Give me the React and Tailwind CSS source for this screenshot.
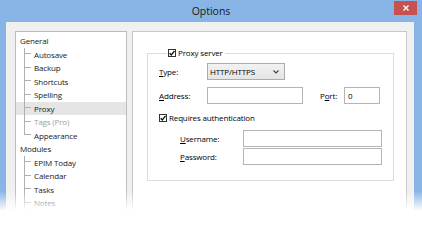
import React from "react";

function Check() {
  return (
    <span className="w-[8px] h-[8px] shrink-0 border border-[#333] bg-white flex items-center justify-center">
      <svg width="6" height="6" viewBox="0 0 6 6">
        <path d="M0.6 3.2 L2.3 4.9 L5.5 0.8" stroke="#111" strokeWidth="1.3" fill="none" />
      </svg>
    </span>
  );
}

function TreeRow({ label, child, last, selected, disabled }) {
  return (
    <div className={"flex h-[13.5px] items-stretch " + (selected ? "bg-[#e5e5e5]" : "")}>
      {child ? (
        <>
          <div className="w-[8px] shrink-0" />
          <div className="w-[7px] shrink-0 flex flex-col mr-[3px]">
            <div className="h-1/2 border-l border-b border-[#b0b0b0]" />
            <div className={"h-1/2 " + (last ? "" : "border-l border-[#b0b0b0]")} />
          </div>
        </>
      ) : (
        <div className="w-[4px] shrink-0" />
      )}
      <span className={"leading-[13.5px] whitespace-nowrap " + (disabled ? "text-[#a0a0a0]" : "text-[#1a1a1a]")}>
        {label}
      </span>
    </div>
  );
}

function Tree() {
  return (
    <div className="w-[112px] shrink-0 border border-[#bcbcbc] bg-white pt-[2px] flex flex-col">
      <TreeRow label="General" />
      <TreeRow label="Autosave" child />
      <TreeRow label="Backup" child />
      <TreeRow label="Shortcuts" child />
      <TreeRow label="Spelling" child />
      <TreeRow label="Proxy" child selected />
      <TreeRow label="Tags (Pro)" child disabled />
      <TreeRow label="Appearance" child last />
      <TreeRow label="Modules" />
      <TreeRow label="EPIM Today" child />
      <TreeRow label="Calendar" child />
      <TreeRow label="Tasks" child />
      <TreeRow label="Notes" child />
    </div>
  );
}

function Input({ className, children }) {
  return (
    <div className={"h-[17px] border border-[#b4b4b4] bg-white flex items-center px-[3px] " + (className || "")}>
      {children}
    </div>
  );
}

function Right() {
  return (
    <div className="flex-1 border border-[#c8c8c8] bg-white pl-[14px] pr-[12px]">
      <fieldset className="mt-[15px] border border-[#dcdcdc] pl-[11px] pb-[15px]">
        <legend className="ml-[8px] px-[1px] leading-[12px] h-[12px] flex items-center gap-[2px]">
          <Check />
          <span className="pr-[1px]">Proxy server</span>
        </legend>
        <div className="mt-[4px] flex items-center h-[17px]">
          <span className="w-[48px] shrink-0"><u>T</u>ype:</span>
          <div className="w-[78px] h-[17px] border border-[#acacac] bg-linear-to-b from-[#f2f2f2] to-[#e5e5e5] flex items-center justify-between pl-[2px] pr-[5px]">
            <span>HTTP/HTTPS</span>
            <svg width="6" height="4" viewBox="0 0 6 4">
              <path d="M0.5 0.5 L3 3 L5.5 0.5" stroke="#444" strokeWidth="1.1" fill="none" />
            </svg>
          </div>
        </div>
        <div className="mt-[7px] flex items-center h-[17px]">
          <span className="w-[48px] shrink-0"><u>A</u>ddress:</span>
          <Input className="w-[96px]" />
          <span className="ml-[17px] w-[24px] shrink-0">P<u>o</u>rt:</span>
          <Input className="w-[36px]">0</Input>
        </div>
        <div className="mt-[7px] flex items-center h-[14px] gap-[2px]">
          <Check />
          <span>Requires authentication</span>
        </div>
        <div className="mt-[5px] flex items-center h-[17px] pl-[21px]">
          <span className="w-[63px] shrink-0"><u>U</u>sername:</span>
          <Input className="w-[139px]" />
        </div>
        <div className="mt-[1px] flex items-center h-[17px] pl-[21px]">
          <span className="w-[63px] shrink-0"><u>P</u>assword:</span>
          <Input className="w-[139px]" />
        </div>
      </fieldset>
    </div>
  );
}

export default function App() {
  return (
    <div className="relative w-[422px] h-[210px] overflow-hidden bg-[#88b5e5] flex flex-col font-['Open_Sans',sans-serif] text-[8px] tracking-[-0.15px] text-black">
      <div className="h-[22px] shrink-0 grid grid-cols-[1fr_auto_1fr] items-start">
        <div />
        <div className="text-[10.5px] tracking-normal leading-[22px] text-[#1a1a1a]">Options</div>
        <div className="flex justify-end pr-[5px] pt-[1px]">
          <div className="w-[23px] h-[14px] bg-[#c75050] flex items-center justify-center">
            <svg width="6" height="6" viewBox="0 0 6 6">
              <path d="M0.5 0.5 L5.5 5.5 M5.5 0.5 L0.5 5.5" stroke="#fff" strokeWidth="1.4" />
            </svg>
          </div>
        </div>
      </div>
      <div className="flex-1 ml-[6px] mr-[8px] bg-[#f0f0f0] flex gap-[5px] pl-[9px] pr-[7px] pt-[9px]">
        <Tree />
        <Right />
      </div>
      <div className="absolute inset-x-0 bottom-0 h-[19px] bg-linear-to-b from-white/0 to-white/95" />
    </div>
  );
}
